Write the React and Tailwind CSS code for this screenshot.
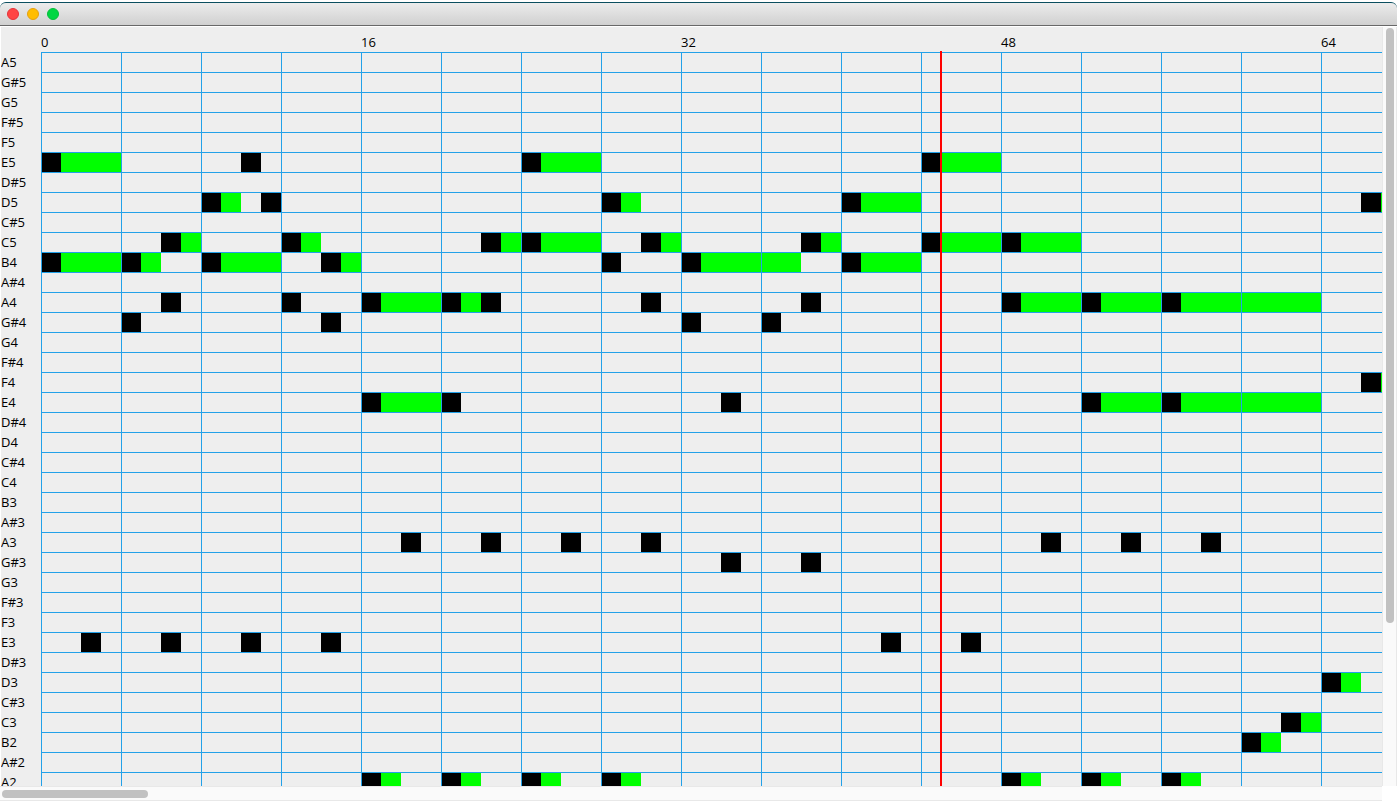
const PITCHES = [
  "A5", "G#5", "G5", "F#5", "F5", "E5", "D#5", "D5", "C#5", "C5", "B4", "A#4",
  "A4", "G#4", "G4", "F#4", "F4", "E4", "D#4", "D4", "C#4", "C4", "B3", "A#3",
  "A3", "G#3", "G3", "F#3", "F3", "E3", "D#3", "D3", "C#3", "C3", "B2", "A#2", "A2",
];

// Each note is [start beat, length in beats].
const NOTES = {
  E5: [[0, 4], [10, 1], [24, 4], [44, 4]],
  D5: [[8, 2], [11, 1], [28, 2], [40, 4], [66, 2]],
  C5: [[6, 2], [12, 2], [22, 2], [24, 4], [30, 2], [38, 2], [44, 4], [48, 4]],
  B4: [[0, 4], [4, 2], [8, 4], [14, 2], [28, 1], [32, 6], [40, 4]],
  A4: [[6, 1], [12, 1], [16, 4], [20, 2], [22, 1], [30, 1], [38, 1], [48, 4], [52, 4], [56, 8]],
  "G#4": [[4, 1], [14, 1], [32, 1], [36, 1]],
  F4: [[66, 2]],
  E4: [[16, 4], [20, 1], [34, 1], [52, 4], [56, 8]],
  A3: [[18, 1], [22, 1], [26, 1], [30, 1], [50, 1], [54, 1], [58, 1]],
  "G#3": [[34, 1], [38, 1]],
  E3: [[2, 1], [6, 1], [10, 1], [14, 1], [42, 1], [46, 1]],
  D3: [[64, 2]],
  C3: [[62, 2]],
  B2: [[60, 2]],
  A2: [[16, 2], [20, 2], [24, 2], [28, 2], [48, 2], [52, 2], [56, 2]],
};

const MARKS = [0, 16, 32, 48, 64];
const MEASURES = Array.from({ length: 32 }, (_, i) => i);
const PLAYHEAD_BEAT = 45;

function TitleBar() {
  return (
    <header className="mt-[2px] flex h-6 shrink-0 items-center gap-2 rounded-t-md border-t border-b border-t-[#0b4f60] border-b-[#686868] bg-linear-to-b from-[#ececec] to-[#d0d0d0] pl-[7px]">
      <button type="button" aria-label="Close" className="size-3 rounded-full border border-[#e5333a] bg-[#ff4544]" />
      <button type="button" aria-label="Minimize" className="size-3 rounded-full border border-[#e6a00f] bg-[#ffbd00]" />
      <button type="button" aria-label="Zoom" className="size-3 rounded-full border border-[#06bd3c] bg-[#00d742]" />
    </header>
  );
}

function Ruler() {
  return (
    <div className="flex h-6 shrink-0 items-end pl-10">
      {MARKS.map((mark) => (
        <span key={mark} className="w-80 shrink-0 leading-[18px]">{mark}</span>
      ))}
    </div>
  );
}

function Lane({ pitch }) {
  return (
    <div className="grid h-5 auto-cols-[20px] grid-flow-col grid-rows-1 border-t border-[#23a1e8]">
      {(NOTES[pitch] ?? []).map(([start, length]) => (
        <div
          key={start}
          className="row-start-1 flex bg-[#00ff00]"
          style={{ gridColumn: `${start + 1} / span ${length}` }}
        >
          <div className="w-5 bg-black" />
        </div>
      ))}
    </div>
  );
}

function Roll() {
  return (
    <div className="flex min-h-0 flex-1 overflow-hidden pt-px">
      <ul className="w-10 shrink-0">
        {PITCHES.map((pitch) => (
          <li key={pitch} className="h-5 leading-5">{pitch}</li>
        ))}
      </ul>
      <div className="relative min-w-0 flex-1 self-start">
        {PITCHES.map((pitch) => (
          <Lane key={pitch} pitch={pitch} />
        ))}
        <div className="absolute inset-0 flex overflow-hidden">
          {MEASURES.map((measure) => (
            <div key={measure} className="w-20 shrink-0 border-l border-[#23a1e8]" />
          ))}
        </div>
        <div
          className="absolute -top-px bottom-0 w-[2px] -translate-x-px bg-[#ff0000]"
          style={{ left: PLAYHEAD_BEAT * 20 }}
        />
      </div>
    </div>
  );
}

export default function App() {
  return (
    <div className="flex h-screen flex-col overflow-hidden bg-white font-['Open_Sans','Noto_Sans',sans-serif] text-[13px] text-black">
      <TitleBar />
      <div className="mt-px flex min-h-0 flex-1">
        <main className="ml-px flex min-w-0 flex-1 flex-col overflow-hidden bg-[#eeeeee]">
          <Ruler />
          <Roll />
        </main>
        <div className="w-[15px] shrink-0 border-x border-[#e8e8e8] bg-[#fafafa] px-[3px] pt-px">
          <div className="h-[595px] w-2 rounded-full bg-[#c1c1c1]" />
        </div>
      </div>
      <div className="mr-[15px] h-[15px] shrink-0 border-y border-[#e8e8e8] bg-[#fafafa] py-[3px] pl-[2px]">
        <div className="h-2 w-[146px] rounded-full bg-[#c1c1c1]" />
      </div>
    </div>
  );
}
